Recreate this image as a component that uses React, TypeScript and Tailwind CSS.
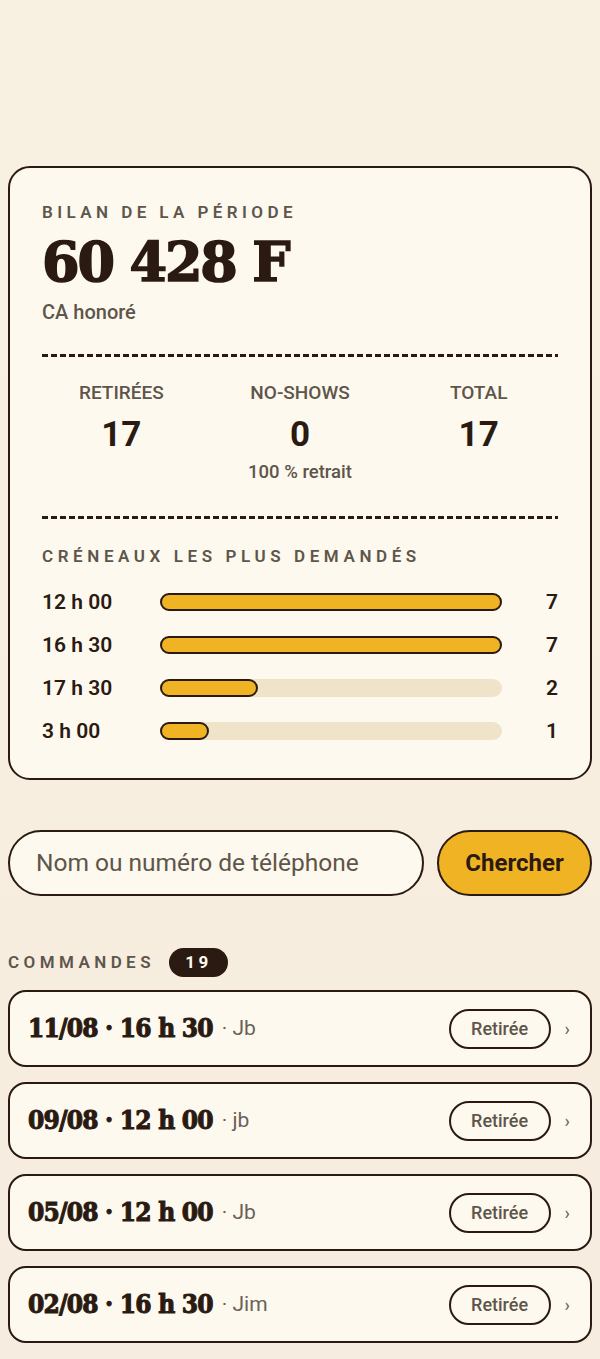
import React from 'react'

const slots = [
  { label: '12 h 00', count: 7 },
  { label: '16 h 30', count: 7 },
  { label: '17 h 30', count: 2 },
  { label: '3 h 00', count: 1 },
]

const orders = [
  { when: '11/08 · 16 h 30', who: 'Jb' },
  { when: '09/08 · 12 h 00', who: 'jb' },
  { when: '05/08 · 12 h 00', who: 'Jb' },
  { when: '02/08 · 16 h 30', who: 'Jim' },
]

const slab = "font-['DejaVu_Serif',serif] font-bold"

function Dashed() {
  return (
    <div className="h-[3px] w-full bg-[repeating-linear-gradient(90deg,#2a1a12_0_6px,transparent_6px_9px)]" />
  )
}

export default function App() {
  const max = Math.max(...slots.map((s) => s.count))

  return (
    <div className="min-h-[1359px] bg-[linear-gradient(180deg,#f8f1e1,#f6ecdf)] px-2 pt-[166px] font-['Roboto',sans-serif] text-[#2a1a12]">
      {/* Bilan */}
      <section className="rounded-[22px] border-[2.5px] border-[#2a1a12] bg-[#fdf9ee] px-8 pt-[33px] pb-[35px]">
        <p className="text-[17px] font-semibold uppercase leading-[22px] tracking-[0.26em] text-[#5e554b]">
          Bilan de la période
        </p>
        <p className={`${slab} mt-[8px] text-[54px] leading-[62px] tracking-[-0.04em] [-webkit-text-stroke:1.6px_#2a1a12]`}>
          60 428 F
        </p>
        <p className="mt-[4px] text-[20px] font-medium text-[#5e554b]">CA honoré</p>

        <div className="mt-[27px]">
          <Dashed />
        </div>

        <div className="grid grid-cols-3 gap-5 pt-[25px] pb-[33px] text-center">
          <div>
            <p className="text-[19px] font-medium leading-[22px] text-[#5e554b]">RETIRÉES</p>
            <p className="mt-[11px] text-[35px] font-bold leading-[40px]">17</p>
          </div>
          <div>
            <p className="text-[19px] font-medium leading-[22px] text-[#5e554b]">NO-SHOWS</p>
            <p className="mt-[11px] text-[35px] font-bold leading-[40px]">0</p>
            <p className="mt-[6px] text-[18.5px] font-medium leading-[22px] text-[#5e554b]">100 % retrait</p>
          </div>
          <div>
            <p className="text-[19px] font-medium leading-[22px] text-[#5e554b]">TOTAL</p>
            <p className="mt-[11px] text-[35px] font-bold leading-[40px]">17</p>
          </div>
        </div>

        <Dashed />

        <p className="mt-[26px] text-[17px] font-semibold uppercase leading-[22px] tracking-[0.27em] text-[#5e554b]">
          Créneaux les plus demandés
        </p>

        <div className="mt-[23px] flex flex-col gap-[19px]">
          {slots.map((s) => (
            <div key={s.label} className="flex items-center gap-[14px]">
              <span className="w-[104px] text-[21px] font-semibold leading-[24px]">{s.label}</span>
              <div className="h-[18px] flex-1 rounded-full bg-[#efe3c9]">
                <div
                  className="h-full rounded-full border-[2.5px] border-[#2a1a12] bg-[#f0b323]"
                  style={{ width: `${(s.count / max) * 100}%` }}
                />
              </div>
              <span className="w-[42px] text-right text-[21px] font-semibold leading-[24px]">{s.count}</span>
            </div>
          ))}
        </div>
      </section>

      {/* Recherche */}
      <div className="mt-[50px] flex gap-[13px]">
        <div className="flex h-[66px] flex-1 items-center rounded-full border-[2.5px] border-[#2a1a12] bg-[#fdf9ee] px-[26px]">
          <span className="text-[24.5px] text-[#5e554b]">Nom ou numéro de téléphone</span>
        </div>
        <button className="h-[66px] w-[155px] rounded-full border-[2.5px] border-[#2a1a12] bg-[#f0b323] text-[24px] font-bold text-[#2a1a12]">
          Chercher
        </button>
      </div>

      {/* Commandes */}
      <div className="mt-[52px] flex items-center gap-[14px]">
        <span className="text-[17px] font-semibold uppercase tracking-[0.26em] text-[#5e554b]">Commandes</span>
        <span className="flex h-[29px] w-[59px] items-center justify-center rounded-full bg-[#2a1a12] text-[17px] font-bold tracking-[0.2em] text-[#fdf9ee]">
          19
        </span>
      </div>

      <div className="mt-[13px] flex flex-col gap-[15px]">
        {orders.map((o) => (
          <div
            key={o.when}
            className="flex h-[77px] items-center rounded-[18px] border-[2.5px] border-[#2a1a12] bg-[#fdf9ee] pl-[18px] pr-[20px]"
          >
            <span className={`${slab} text-[26px] tracking-[-0.03em] [font-stretch:condensed] [-webkit-text-stroke:1px_#2a1a12]`}>
              {o.when}
            </span>
            <span className="ml-[9px] text-[21px] text-[#6b6157]">· {o.who}</span>
            <span className="ml-auto flex h-[40px] w-[102px] items-center justify-center rounded-full border-[2.5px] border-[#2a1a12] text-[18px] font-medium text-[#5e554b]">
              Retirée
            </span>
            <span className="ml-[14px] text-[18px] text-[#6b6157]">›</span>
          </div>
        ))}
      </div>
    </div>
  )
}
